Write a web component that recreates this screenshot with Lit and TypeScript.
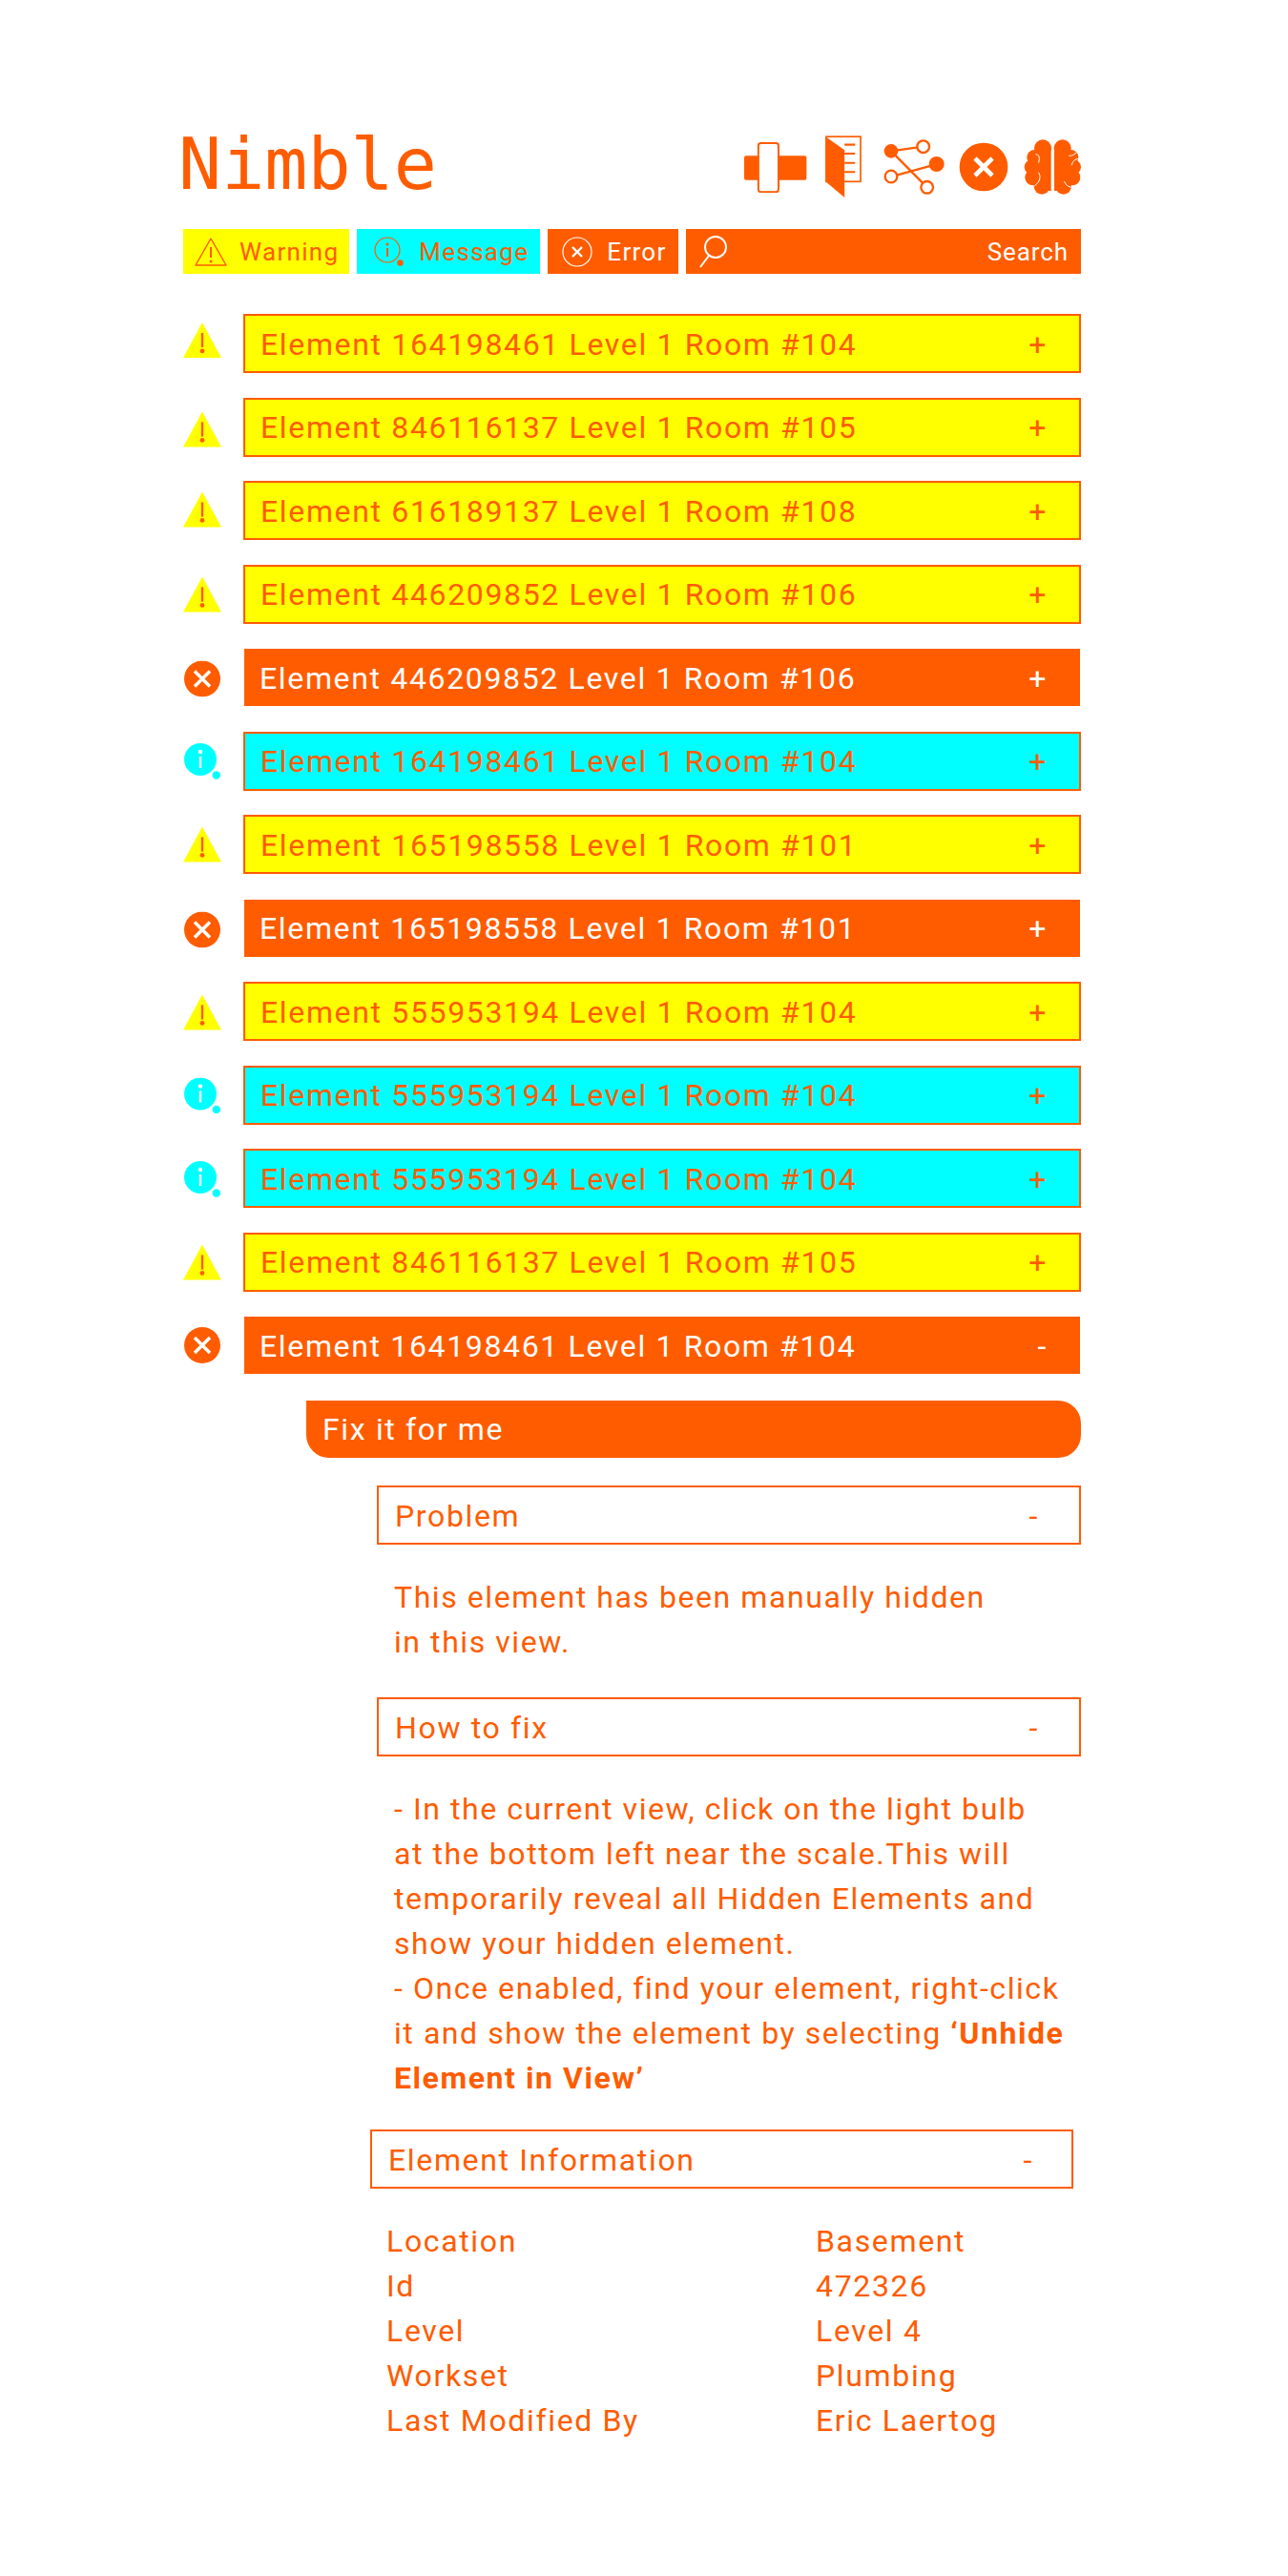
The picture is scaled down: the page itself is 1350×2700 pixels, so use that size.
import { LitElement, html, css, svg } from "lit";
import { customElement } from "lit/decorators.js";
import { classMap } from "lit/directives/class-map.js";

type Kind = "warning" | "message" | "error";

// nudge: the status icons do not sit quite centred on their rows
const rows: { kind: Kind; text: string; sign?: string; nudge: number }[] = [
  { kind: "warning", text: "Element 164198461 Level 1 Room #104", nudge: -3.5 },
  { kind: "warning", text: "Element 846116137 Level 1 Room #105", nudge: 2 },
  { kind: "warning", text: "Element 616189137 Level 1 Room #108", nudge: -1 },
  { kind: "warning", text: "Element 446209852 Level 1 Room #106", nudge: 0 },
  { kind: "error", text: "Element 446209852 Level 1 Room #106", nudge: 1.5 },
  { kind: "message", text: "Element 164198461 Level 1 Room #104", nudge: 0 },
  { kind: "warning", text: "Element 165198558 Level 1 Room #101", nudge: 0 },
  { kind: "error", text: "Element 165198558 Level 1 Room #101", nudge: 1.5 },
  { kind: "warning", text: "Element 555953194 Level 1 Room #104", nudge: 1 },
  { kind: "message", text: "Element 555953194 Level 1 Room #104", nudge: 0.5 },
  { kind: "message", text: "Element 555953194 Level 1 Room #104", nudge: 1 },
  { kind: "warning", text: "Element 846116137 Level 1 Room #105", nudge: 0 },
  { kind: "error", text: "Element 164198461 Level 1 Room #104", sign: "-", nudge: 0 },
];

const info = [
  ["Location", "Basement"],
  ["Id", "472326"],
  ["Level", "Level 4"],
  ["Workset", "Plumbing"],
  ["Last Modified By", "Eric Laertog"],
];

const ORANGE = "#ff5c00";

const statusIcons = {
  warning: html`<svg width="42" height="40" viewBox="0 0 42 40">
    <path d="M21 0.5 L42 39.5 H0 Z" fill="#ffff00" />
    <path d="M21 12 V28" stroke=${ORANGE} stroke-width="2.5" />
    <circle cx="21" cy="32" r="2.5" fill=${ORANGE} />
  </svg>`,
  error: html`<svg width="38" height="38" viewBox="0 0 38 38">
    <circle cx="19" cy="19" r="19" fill=${ORANGE} />
    <path d="M11 11 L27 27 M27 11 L11 27" stroke="#fff" stroke-width="3.5" />
  </svg>`,
  message: html`<svg width="38" height="38" viewBox="0 0 38 38">
    <circle cx="17" cy="17" r="17" fill="#00ffff" />
    <circle cx="33.8" cy="33.5" r="4.2" fill="#00ffff" />
    <circle cx="17" cy="9" r="2.2" fill="#fff" />
    <path d="M17 14 V26" stroke="#fff" stroke-width="2.4" />
  </svg>`,
};

const headerIcons = [
  html`<svg width="66" height="53" viewBox="60 85 200 160">
    <rect x="60" y="128" width="198" height="77" rx="6" fill=${ORANGE} />
    <rect x="105" y="88" width="64" height="155" rx="8" fill="#fff" stroke=${ORANGE} stroke-width="6" />
  </svg>`,
  html`<svg width="38" height="66" viewBox="315 75 113 195">
    <rect x="318" y="78" width="107" height="140" fill="#fff" stroke=${ORANGE} stroke-width="5" />
    <path d="M316 78 L375 120 V268 L316 218 Z" fill=${ORANGE} />
    <path d="M375 103 H408 M375 131 H408 M375 160 H408 M375 188 H408" stroke=${ORANGE} stroke-width="6" />
  </svg>`,
  html`<svg width="64" height="60" viewBox="495 82 192 180">
    <path d="M519 122 L620 108 M519 122 L632 236 M520 202 L662 163" stroke=${ORANGE} stroke-width="7" />
    <circle cx="519" cy="122" r="22" fill=${ORANGE} />
    <circle cx="662" cy="163" r="24" fill=${ORANGE} />
    <circle cx="620" cy="108" r="19" fill="#fff" stroke=${ORANGE} stroke-width="7" />
    <circle cx="519" cy="202" r="19" fill="#fff" stroke=${ORANGE} stroke-width="7" />
    <circle cx="632" cy="236" r="19" fill="#fff" stroke=${ORANGE} stroke-width="7" />
  </svg>`,
  html`<svg width="52" height="52" viewBox="732 88 156 156">
    <circle cx="810" cy="166" r="76" fill=${ORANGE} />
    <path d="M783 139 L837 193 M837 139 L783 193" stroke="#fff" stroke-width="14" />
  </svg>`,
  html`<svg width="60" height="58" viewBox="938 78 180 174">
    ${[0, 1].map(
      (side) => svg`<g transform=${side ? "matrix(-1 0 0 1 2058 0)" : ""} fill=${ORANGE}>
        <circle cx="998" cy="106" r="27" />
        <circle cx="972" cy="135" r="24" />
        <circle cx="962" cy="165" r="22" />
        <circle cx="967" cy="198" r="25" />
        <circle cx="995" cy="226" r="25" />
        <rect x="975" y="100" width="49" height="140" />
      </g>`
    )}
    <path d="M975 125 Q992 125 985 152 M985 182 Q998 205 972 225 M1080 130 Q1100 130 1108 112 M1118 140 Q1095 135 1088 160 M1065 210 Q1075 232 1095 228"
      fill="none" stroke="#fff" stroke-width="3" />
  </svg>`,
];

@customElement("app-root")
export class AppRoot extends LitElement {
  static styles = css`
    :host {
      display: block;
      width: 1350px;
      min-height: 2700px;
      background: #fff;
      color: #ff5c00;
      font-family: Roboto, "Liberation Sans", sans-serif;
      font-size: 32px;
      letter-spacing: 1.65px;
    }
    .page {
      display: flex;
      flex-direction: column;
      padding: 120px 217px 0 192px;
    }
    .top {
      display: flex;
      justify-content: space-between;
      align-items: center;
      height: 110px;
    }
    .logo {
      font-family: "DejaVu Sans Mono", monospace;
      font-size: 75px;
      line-height: 104px;
      letter-spacing: 0;
      margin: 0 0 6px -5px;
    }
    .tools {
      display: flex;
      align-items: center;
    }
    .tools svg:nth-child(2) {
      margin-left: 19px;
    }
    .tools svg:nth-child(3) {
      margin-left: 23px;
    }
    .tools svg:nth-child(4) {
      margin-left: 15px;
    }
    .tools svg:nth-child(5) {
      margin-left: 16px;
    }
    .filters {
      display: flex;
      gap: 8px;
      margin-top: 10px;
      font-size: 26px;
      letter-spacing: 1.3px;
    }
    .chip {
      display: flex;
      align-items: center;
      gap: 15px;
      height: 47px;
      padding: 0 12px 0 15px;
      box-sizing: border-box;
    }
    .chip.warning {
      background: #ffff00;
      gap: 13px;
      padding: 0 11px 0 12px;
    }
    .chip.message {
      background: #00ffff;
      padding: 0 12px 0 18px;
    }
    .chip.error,
    .search {
      background: #ff5c00;
      color: #fff;
    }
    .chip.search {
      flex: 1;
      justify-content: space-between;
      padding: 0 13px 0 12px;
      letter-spacing: 0.9px;
    }
    .rows {
      display: flex;
      flex-direction: column;
      gap: 25.5px;
      margin-top: 42px;
    }
    .row {
      display: flex;
      align-items: center;
    }
    .status {
      display: flex;
      justify-content: center;
      width: 40px;
      margin-right: 23px;
      flex: none;
    }
    .bar {
      flex: 1;
      display: flex;
      justify-content: space-between;
      align-items: center;
      height: 62px;
      box-sizing: border-box;
      padding: 1px 33px 0 16px;
      border: 2px solid #ff5c00;
    }
    .bar.warning {
      background: #ffff00;
    }
    .bar.message {
      background: #00ffff;
    }
    .bar.error {
      background: #ff5c00;
      color: #fff;
      height: 60px;
      margin: 1px;
      border: none;
      padding: 1px 34px 0 16px;
    }
    .fix {
      margin: 27px 0 0 129px;
      height: 60px;
      padding: 0 17px;
      display: flex;
      align-items: center;
      background: #ff5c00;
      color: #fff;
      border-radius: 0 24px 24px 24px;
    }
    .section {
      margin-left: 203px;
    }
    .section .bar {
      padding: 1px 42px 0 17px;
    }
    .first {
      margin-top: 29px;
    }
    .text {
      line-height: 47px;
      padding: 32px 0 0 18px;
      letter-spacing: 1.57px;
      white-space: nowrap;
    }
    .text.short {
      padding-bottom: 34px;
    }
    .text strong {
      font-weight: 700;
    }
    .text.long {
      padding-bottom: 30px;
    }
    .details {
      margin: 0 8px 0 196px;
    }
    .details .bar {
      padding: 1px 40px 0 17px;
    }
    .grid {
      display: grid;
      grid-template-columns: 450px 1fr;
      padding: 32px 0 0 17px;
      line-height: 47px;
    }
  `;

  render() {
    return html`<div class="page">
      <header class="top">
        <div class="logo">Nimble</div>
        <div class="tools">${headerIcons}</div>
      </header>
      <nav class="filters">
        <div class="chip warning">
          <svg width="34" height="32" viewBox="0 0 34 32" fill="none" stroke=${ORANGE} stroke-width="1.4">
            <path d="M17 2 L33 30 H1 Z" stroke-linejoin="round" />
            <path d="M17 11 V22" stroke-width="2" />
            <circle cx="17" cy="26" r="1.5" fill=${ORANGE} stroke="none" />
          </svg>
          Warning
        </div>
        <div class="chip message">
          <svg width="32" height="32" viewBox="0 0 32 32" fill="none" stroke=${ORANGE} stroke-width="1.2">
            <circle cx="14" cy="14" r="13" />
            <circle cx="14" cy="8" r="1.6" fill=${ORANGE} stroke="none" />
            <path d="M14 12 V21" stroke-width="2" />
            <circle cx="27.5" cy="27.5" r="3.2" fill=${ORANGE} stroke="none" />
          </svg>
          Message
        </div>
        <div class="chip error">
          <svg width="32" height="32" viewBox="0 0 32 32" fill="none" stroke="#fff" stroke-width="1.2">
            <circle cx="16" cy="16" r="15" />
            <path d="M11 11 L21 21 M21 11 L11 21" stroke-width="2.4" />
          </svg>
          Error
        </div>
        <div class="chip search">
          <svg width="32" height="38" viewBox="0 0 32 38" fill="none" stroke="#fff" stroke-width="2">
            <circle cx="19" cy="14" r="11" />
            <path d="M12 23 L3 35" />
          </svg>
          Search
        </div>
      </nav>
      <main class="rows">
        ${rows.map(
          (row) => html`<div class="row">
            <div class="status" style="transform: translateY(${row.nudge}px)">${statusIcons[row.kind]}</div>
            <div class=${classMap({ bar: true, [row.kind]: true })}>
              <span>${row.text}</span><span>${row.sign ?? "+"}</span>
            </div>
          </div>`
        )}
      </main>
      <div class="fix">Fix it for me</div>
      <section class="section first">
        <div class="bar"><span>Problem</span><span>-</span></div>
        <div class="text short">This element has been manually hidden<br />in this view.</div>
      </section>
      <section class="section">
        <div class="bar"><span>How to fix</span><span>-</span></div>
        <div class="text long">
          - In the current view, click on the light bulb<br />
          at the bottom left near the scale.This will<br />
          temporarily reveal all Hidden Elements and<br />
          show your hidden element.<br />
          - Once enabled, find your element, right-click<br />
          it and show the element by selecting <strong>‘Unhide<br />Element in View’</strong>
        </div>
      </section>
      <section class="details">
        <div class="bar"><span>Element Information</span><span>-</span></div>
        <div class="grid">
          ${info.map(([key, value]) => html`<div>${key}</div><div>${value}</div>`)}
        </div>
      </section>
    </div>`;
  }
}
